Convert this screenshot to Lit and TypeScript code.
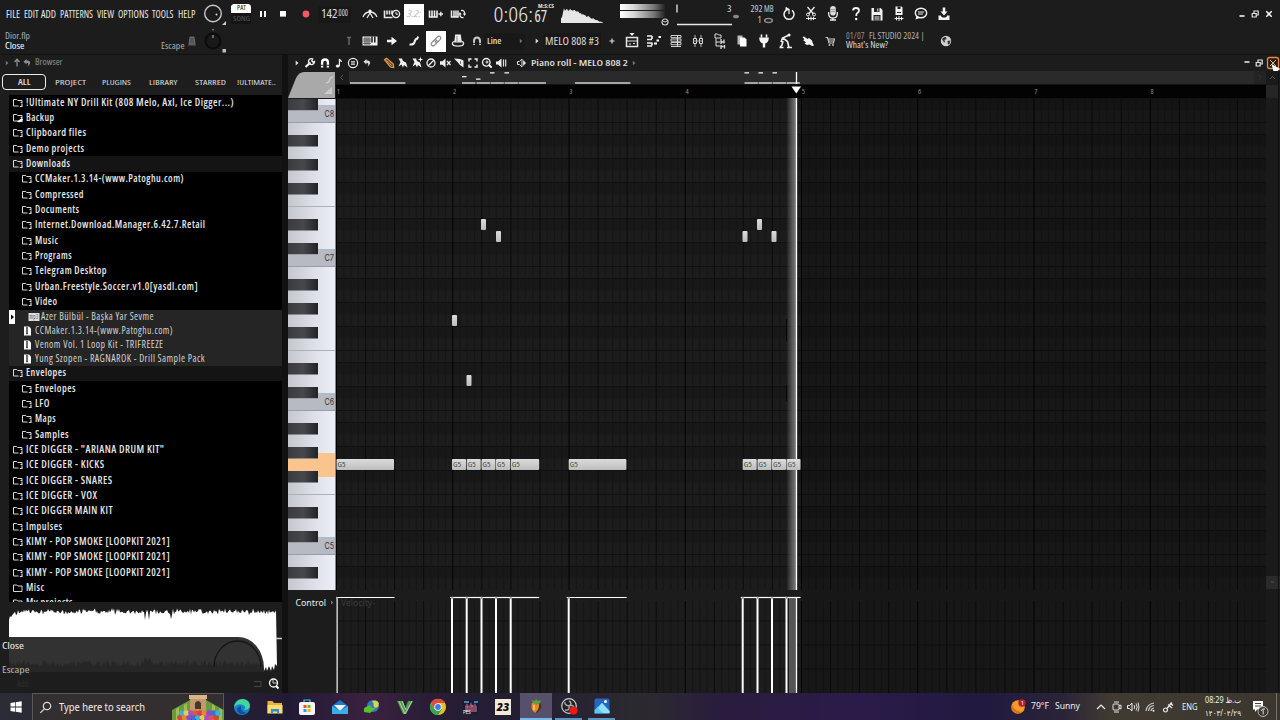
import { LitElement, html, svg, css } from "lit";
import { customElement } from "lit/decorators.js";

type Item = [number, number, unknown];

/** One line of text set to an exact advance width. */
const line = (s: string, w: number, size: number, cls = "") => html`<svg
  class="line ${cls}" width=${w} height=${size * 1.3}><text x="0" y=${size * 0.97} font-size=${size}
  textLength=${w} lengthAdjust="spacingAndGlyphs">${s}</text></svg>`;

/** Icon whose origin lies in the middle of its box. */
const icon = (body: unknown, w = 20, h = 26) => html`<svg class="icon" width=${w} height=${h}
  viewBox="${-w / 2} ${-h / 2} ${w} ${h}">${body}</svg>`;

/** Lays items out in a row: [left edge, width, content]. */
const strip = (items: Item[], start = 0) => {
  let x = start;
  return items.map(([l, w, c]) => {
    const gap = l - x;
    x = l + w;
    return html`<div class="cell" style="width:${w}px;margin-left:${gap}px">${c}</div>`;
  });
};
const at = (cx: number, body: unknown, w = 20, h = 26): Item => [cx - w / 2, w, icon(body, w, h)];

const noise = (n: number) => {
  const v = Math.sin(n * 127.1 + 11.7) * 43758.5453;
  return v - Math.floor(v);
};

const menu: [string, number, number][] = [
  ["FILE", 6, 14], ["EDIT", 23.5, 14.5], ["ADD", 41, 15], ["PATTERNS", 59.5, 33],
  ["VIEW", 97, 17], ["OPTIONS", 118, 30.5], ["TOOLS", 152, 21.5], ["HELP", 177.5, 17.5],
];

const G = {
  knob: svg`<circle cx="0" cy="-.5" r="8.3" fill="#1b1b1b" stroke="#c9c9c9" stroke-width="1.4"/><circle cx="3.5" cy=".5" r="1" fill="#ddd"/><path d="M13 7v4h-4z" fill="#ccc"/>`,
  knobDark: svg`<circle cx="0" cy="0" r="7.5" fill="#191919" stroke="#0b0b0b" stroke-width="2"/><path d="M0-6v3M0-12v1.500" stroke="#bbb"/><rect x="9.5" y="8" width="3.5" height="3.5" fill="#bbb"/>`,
  pause: svg`<rect x="-3" y="-3" width="2" height="6" fill="#fff"/><rect x="1" y="-3" width="2" height="6" fill="#fff"/>`,
  stop: svg`<rect x="-3" y="-3" width="6" height="5.6" fill="#fff"/>`,
  rec: svg`<circle r="3.4" fill="#f05a62"/>`,
  metro: svg`<g fill="none" stroke="#e4e4e4" stroke-width="1.3"><path d="M-7 3Q-5-2 0-2Q5-2 7 3M0-3v2M-3 4L0-1L3 4"/></g><circle cx="0" cy="-3" r="1.6" fill="#fff"/>`,
  wait: svg`<path d="M-7.5-3.5v7h8M-5-3.5v4M-2.5-3.5v4M0-3.5v4" fill="none" stroke="#e8e8e8" stroke-width="1.6"/><circle cx="4" cy="0" r="3.6" fill="#1c1c1c" stroke="#eee" stroke-width="1.3"/><path d="M4-2v2.2h2" stroke="#eee" fill="none"/>`,
  step: svg`<path d="M-6.5-3.5v6.5h7.5v-6.5M-4-3.5v6M-1.5-3.5v6" fill="none" stroke="#eee" stroke-width="1.6"/><path d="M2.5 0h4.5M4.8-2.2v4.4" stroke="#eee" stroke-width="1.4"/>`,
  loop: svg`<path d="M-6.5-3.5v6.5h6.5v-6.5M-4-3.5v6M-2-3.5v6" fill="none" stroke="#eee" stroke-width="1.5"/><path d="M3-3.500q4-.5 3.500 3.500M5.500 3.500q-4 .5-3.500-3.500" stroke="#eee" stroke-width="1.3" fill="none"/><path d="M4.800-.5h3.400L6.500 2zM.3.500h3.400L2-2z" fill="#eee"/>`,
  power: svg`<path d="M-3-3.7A5 5 0 1 0 3-3.7" fill="none" stroke="#f2f2f2" stroke-width="1.5"/><path d="M0-4.5V0M-3-3.7l.2-2.6 2.6 1.6z" stroke="#f2f2f2" stroke-width="1.2" fill="#fff"/>`,
  cut: svg`<path d="M-3.5-7L2.5 0M3.5-7L-2.5 0" stroke="#eee" stroke-width="1.3"/><circle cx="-3" cy=".5" r="1.5" fill="none" stroke="#eee"/><circle cx="3" cy=".5" r="1.5" fill="none" stroke="#eee"/><path d="M-5 4.5h10M-2.5 3v3M0 2.5v4M2.5 3v3" stroke="#eee"/>`,
  mic: svg`<rect x="-2.8" y="-8" width="5.6" height="9.500" rx="2.8" fill="#ddd"/><path d="M-4.300-2v2q0 4 4.300 4t4.300-4v-2M0 4v2M-3 6h6" fill="none" stroke="#eee" stroke-width="1.3"/><path d="M-2-4.500h4M-2-2.500h4" stroke="#777" stroke-width=".7"/>`,
  help: svg`<path d="M-3-3.5q.3-2.5 3-2.5q3 0 3 2.5q0 1.6-1.7 2.5Q.2-.3.2 2" fill="none" stroke="#f2f2f2" stroke-width="1.8"/><circle cx=".2" cy="5" r="1.2" fill="#fff"/>`,
  save: svg`<path d="M-5.500-6H3.500L5.500-4V6.500H-5.500z" fill="#f3f3f3"/><path d="M-3-6h5.500v4h-5.500zM-3.500 1h7v5.500h-7z" fill="#222"/><path d="M.8-5.500v3M-2.500 3h5M-2.500 5h5" stroke="#eee" stroke-width="1"/>`,
  saveNew: svg`<path d="M-3.500-7.500H2.500L3.500-6.500V1H-3.500z" fill="#f3f3f3"/><path d="M-1.500-7.500h3v2.500h-3zM-2-2h4v1h-4z" fill="#222"/><path d="M-4.500 4.500h9M-2.500 2.800v3.500M0 2v5M2.500 2.800v3.500" stroke="#eee"/>`,
  chat: svg`<ellipse cx="0" cy="-1" rx="5.700" ry="4.800" fill="none" stroke="#f2f2f2" stroke-width="1.400"/><path d="M-4.500 2l-1 3.500L-1 3.700" fill="#fff"/><path d="M-3-2h6M-3 0h5" stroke="#eee"/>`,
  down: svg`<path d="M-5.500 1.500h2.500q0 2 3 2t3-2h2.500v4.500h-11z" fill="#f3f3f3"/><path d="M-1.300-6.500h2.600v4h2.200L0 1.500-3.500-2.500h2.200z" fill="#f3f3f3"/>`,
  min: svg`<path d="M-2.500 2h5" stroke="#e8e8e8" stroke-width="1.700"/>`,
  restore: svg`<path d="M-2.800-.5h4v3.500h-4zM-1-1v-2h4.200v4h-2" fill="none" stroke="#e2e2e2" stroke-width="1.200"/>`,
  close: svg`<path d="M-2.700-2.700l5.400 5.400M2.700-2.700l-5.400 5.400" stroke="#fff" stroke-width="1.500"/>`,
  metroMini: svg`<path d="M-3 3l1-7h4l1 7zM-4 4h8" fill="#555" stroke="#777" stroke-width=".8"/>`,
  tee: svg`<path d="M0-4v8M-2-3.500h4" stroke="#6a6a6a" stroke-width="1.400"/>`,
  gridKeys: svg`<rect x="-7.500" y="-4.500" width="15" height="9" fill="#f2f2f2"/><path d="M-7-2h8M-7 0h8M-7 2.300h8M-5-4v8M-3-4v8M-1-4v8" stroke="#222" stroke-width=".7"/><path d="M2-4.500v6M4.800-4.500v6" stroke="#161616" stroke-width="1.500"/>`,
  arrow: svg`<path d="M-5-1.300h4.500v-3L5 0-.5 4.300v-3H-5z" fill="#f6f6f6"/>`,
  slide: svg`<path d="M-4.500 3.500q4.500.500 5-2.500t3.500-4" stroke="#eee" fill="none" stroke-width="2"/><path d="M3-5l2 1-1.500 3z" fill="#fff"/>`,
  link: svg`<g fill="none" stroke="#8c8c8c" stroke-width="1.200" transform="rotate(-45)"><rect x="-6" y="-1.900" width="7" height="3.800" rx="1.900"/><rect x="-1" y="-1.900" width="7" height="3.800" rx="1.900"/></g>`,
  hat: svg`<path d="M-2.800-6.500h5.600l1 8h-7.600z" fill="#eee"/><ellipse cx="0" cy="2.500" rx="5.600" ry="2.600" fill="none" stroke="#ddd" stroke-width="1.400"/><path d="M-1-5v6" stroke="#888"/>`,
  magnet: svg`<path d="M-3 4v-4q0-3.500 3-3.500t3 3.500v4" fill="none" stroke="#c8c8c8" stroke-width="2"/><path d="M-4 2.400h2M2 2.400h2" stroke="#222"/>`,
  tri: svg`<path d="M-1.300-2.500L1.500 0-1.300 2.500z" fill="#ddd"/>`,
  triDim: svg`<path d="M-1.200-2.200L1.400 0-1.200 2.200z" fill="#777"/>`,
  plus: svg`<path d="M-2.500 0h5M0-2.500v5" stroke="#ddd" stroke-width="1.200"/>`,
  playlist: svg`<rect x="-5.500" y="-3.500" width="11" height="9" fill="none" stroke="#e6e6e6" stroke-width="1.500"/><path d="M-5 0h10M-3 3h2M1 2.500h2" stroke="#ddd"/><path d="M-2.500-8h5L0-5z" fill="#eee"/>`,
  roll: svg`<path d="M-7-5h5M-7-1.500h5M-7 2h5M-7 5h5M-2-5v3M-2 1.500v3" stroke="#eee" stroke-width="1.700"/><path d="M0 2.500h3M2.500-.5h2.500M4.500-4h2.500" stroke="#fff" stroke-width="2.200"/>`,
  rack: svg`<path d="M-5-5.500h10v2.200h-10zM-5-2h10v2.200h-10zM-5 1.500h10v2.200h-10zM-5 5.500h10" fill="none" stroke="#cfcfcf"/><path d="M1.500-5.500v11" stroke="#ddd"/>`,
  mixer: svg`<path d="M-3-6v12M3-6v12" stroke="#bbb"/><path d="M-4.500-2.500h3v5h-3zM1.500-2.500h3v5h-3z" fill="#1c1c1c" stroke="#ddd"/><path d="M-5 0h10" stroke="#aaa"/>`,
  tree: svg`<path d="M-5-7h2.500l1 1h2.500v3h-6zM-4-2.500v7.500h4M-4 1h4" fill="none" stroke="#ddd"/><path d="M1-2v5M1 1h2.500M4-1.500v4M1 4v4M1 5.500h2.500M4.500 4v3.500" fill="none" stroke="#ddd" stroke-width="1.300"/>`,
  pages: svg`<path d="M-4.500-5.500h5v9h-5z" fill="#bbb"/><path d="M-2-3.500h4.500l2 2v7h-6.500z" fill="#fff"/>`,
  plug: svg`<path d="M-2.500-6.500v3M2.500-6.500v3" stroke="#fff" stroke-width="1.600"/><path d="M-4.800-3.500h9.600q0 5-3.600 6v4h-2.400v-4q-3.600-1-3.600-6z" fill="#f4f4f4"/>`,
  tool: svg`<circle cx="3" cy="-6" r="1.600" fill="#eee"/><path d="M2-5.500L-3.500-3l-1.500 4M-3-3L1.500.5 3 6.500M-3 0l-1 4-2 2.500M-6.500 6.500h4M1 6.500h5" fill="none" stroke="#eee" stroke-width="1.600"/>`,
  hand: svg`<path d="M-5.500-4l1.500-.5 3.500 2.500 1.500-1 3 2.500.5 2L6 4.500 4 5 1.500 3.500-1 4-3.500 2.500-2 1.500-5-1-3.500-1.500z" fill="#f4f4f4"/>`,
  cart: svg`<path d="M-4.500-3.500h2l1.500 5.500h4.500l1-4h-6.500M-1.500 0h5.500" fill="none" stroke="#ccc" stroke-width="1.100"/><circle cx="-.5" cy="4" r="1" fill="#bbb"/><circle cx="3" cy="4" r="1" fill="#bbb"/>`,
  earth: svg`<circle r="5.200" fill="#cfcfcf"/><path d="M-4-2q2-2.500 4-2l.5 2-2 1 .5 2-1 .5zM1.500 0l3-.5-1 3.500-1.500.5z" fill="#333"/>`,
  up: svg`<path d="M0 3.500v-7M-2.500-1L0-3.700 2.500-1" stroke="#8e8e8e" stroke-width="1.300" fill="none"/>`,
  undo: svg`<path d="M-.5-4L-3.500-1.200-.5 1.500V-.2Q2.500 0 .5 3.700 4.500 0 2.500-1.800 1.500-2.700-.5-2.400z" fill="#ddd"/>`,
  wrench: svg`<path d="M-4.500 4l5-4.500" stroke="#eee" stroke-width="2.200"/><path d="M4.500-1.500A3 3 0 1 1 2.600-4.200L1.800-2.200 3-.8z" fill="none" stroke="#eee" stroke-width="1.400"/>`,
  magnetB: svg`<path d="M-2.900 4.500v-5q0-3 2.900-3t2.900 3v5" fill="none" stroke="#fff" stroke-width="2.300"/><path d="M-4.500 2.300h3M1.500 2.300h3" stroke="#222"/>`,
  note: svg`<ellipse cx="-1.300" cy="3" rx="2" ry="1.500" fill="#eee"/><path d="M.4 3V-4Q1-2 3-1.500" stroke="#eee" fill="none" stroke-width="1.200"/>`,
  menuC: svg`<circle r="4.600" fill="none" stroke="#eee" stroke-width="1.200"/><path d="M-2-1.200h4M-2 1.200h4" stroke="#eee" stroke-width="1.200"/>`,
  pencil: svg`<path d="M-4.500-3.200l2-1.600L4.300 1l.4 3.500-3.300-.4z" fill="#6d4820" stroke="#e8a04c" stroke-width="1.100"/><path d="M-3-2.500L2.500 2.500" stroke="#f5c382" stroke-width=".7"/>`,
  brush: svg`<path d="M-4.500-4.500h3.500L0-2l3 1.500L4.500 4.500 1 2 0 4.500-1.500 1.500-4.500 3.500-2.500-1z" fill="#f1f1f1"/>`,
  brush2: svg`<path d="M-4.500-4.500h3.500L0-2l3 1.500L4.500 4.500 1 2 0 4.500-1.500 1.500-4.500 3.500-2.500-1z" fill="#f1f1f1"/><path d="M1.500-3.500h4M3.500-5.500v4" stroke="#fff"/>`,
  no: svg`<circle r="4" fill="none" stroke="#eee" stroke-width="1.300"/><path d="M-2.700 2.700l5.400-5.400" stroke="#eee" stroke-width="1.300"/>`,
  mute: svg`<path d="M-5-1.800h2.500l3-2.700v9l-3-2.700H-5z" fill="#f1f1f1"/><path d="M2-2l3.500 4M5.500-2L2 2" stroke="#eee" stroke-width="1.200"/>`,
  slice: svg`<path d="M-5-4.500Q2-4.500 4.500-2.500V4.500Q1 3-1.500-1z" fill="#eee"/><path d="M1.500-2v3" stroke="#777"/>`,
  select: svg`<path d="M-4-1.500v-2.500h2.500M1.500-4H4v2.500M4 1.500V4H1.500M-1.500 4H-4V1.500" fill="none" stroke="#eee" stroke-width="1.400"/>`,
  zoom: svg`<circle cx="-.7" cy="-.7" r="3.800" fill="none" stroke="#eee" stroke-width="1.300"/><circle cx="0" cy="-1" r="1.500" fill="#bbb"/><path d="M2 2l2.700 2.700" stroke="#fff" stroke-width="1.800"/>`,
  play: svg`<path d="M-5-1.500h2l3.500-3v9L-3 1.500h-2z" fill="#f1f1f1"/><path d="M2.500-3.500v7M4.700-3.500v7" stroke="#ddd" stroke-width="1.200"/>`,
  speaker: svg`<path d="M-4.500-1.500h2L0-4v8l-2.500-2.500h-2z" fill="none" stroke="#ddd"/><path d="M1.200-3L4 0 1.200 3z" fill="#eee"/>`,
};

const folder = (kind: string) => icon(
  kind === "misc"
    ? svg`<path d="M-4.500-3h3.200l1 1H4v5.500h-8.500z" fill="none" stroke="#d8d8d8"/>`
    : svg`<path d="M.5 3h-5v-6.500h3.200l1 1H4V-1" fill="none" stroke="#d8d8d8"/><path d="M4 .5v3M1.800 3.500h2.800M2.500-.5h2" stroke="#d8d8d8" stroke-width="1.200"/>${kind === "link" ? svg`<path d="M-1 3.500L4 0l1 2-4 2.500z" fill="#fff"/>` : ""}`,
  12, 12);

// name, text width, level, kind
const rows: [string, number, number, string][] = [
  ["!Ultimate NY Drill Kit (808 Melo, Axl, Ice Digger...)", 208, 0, ""], ["Backup", 28.5, 0, "link"],
  ["Clipboard files", 60.5, 0, ""], ["Demo projects", 58.5, 0, ""], ["Downloads", 44.5, 0, "open"],
  ["CCMaker.1.3.14-(www.Patoghu.com)", 149, 1, ""], ["Compressed", 49, 1, ""], ["Documents", 44.5, 1, ""],
  ["Internet.Download.Manager.6.42.7.Retail", 170.5, 1, ""], ["Music", 23.5, 1, ""], ["Programs", 37, 1, ""],
  ["Telegram Desktop", 72, 1, ""], ["Urban.Freestyle.Soccer.v1.0[yasdl.com]", 163, 1, ""], ["Video", 22.5, 1, ""],
  ["Azer Bülbül - Başka Yar Sevme", 113, 2, "mp3"], ["CCMaker.1.3.14-(www.Patoghu.com)", 138, 2, "zip"],
  ["Venom Vol. 1 Loop Kit - TRIFREEZE", 128.5, 2, "zip"], ["Yung Szopen - RAGNAROK - Drill Sample Pack", 170, 2, "zip"],
  ["Envelopes", 40.5, 0, "open"], ["Envelopes", 41, 1, ""], ["LFO", 15, 1, ""], ["Maps", 21, 1, ""], ["Samples", 34, 1, ""],
  ["ICE DIGGER - \"ARIANA DRUM KIT\"", 138.5, 0, ""], ["ICE DIGGER - KICKS", 78.5, 0, ""], ["ICE DIGGER - SNARES", 86.5, 0, ""],
  ["ICE DIGGER - VOX", 71.5, 0, ""], ["ICE DIGGER MAIN KIT", 87, 0, ""], ["Impulses", 36.5, 0, ""],
  ["KIMY - POP SMOKE [LOOPKIT 2021]", 144, 0, ""], ["KIMY - POP SMOKE [LOOPKIT 2021]", 144, 0, ""],
  ["KIMY - POP SMOKE [LOOPKIT 2021]", 144, 0, ""], ["Misc", 18.5, 0, "misc"], ["My projects", 47, 0, "misc"],
];

const BAR = 116.25;
const black = [false, true, false, true, false, true, false, false, true, false, true, false]; // B downwards

@customElement("app-root")
export class AppRoot extends LitElement {
  static styles = css`
    :host { display: flex; flex-direction: column; width: 1280px; height: 720px; overflow: hidden; background: #1c1c1c;
      color: #dcdcdc; font-family: "Open Sans", "Noto Sans", sans-serif; font-stretch: 75%; }
    svg { display: block; flex: none; }
    .line { overflow: visible; fill: currentColor; }
    .icon { overflow: visible; }
    .cell { flex: none; height: 100%; display: flex; align-items: center; justify-content: center; }
    .bar { display: flex; flex: none; align-items: center; height: 28px; background: #1c1c1c; }
    .bar.two { height: 27px; box-sizing: border-box; border-bottom: 1px solid #111; }
    .menu { color: #e6e6e6; font-weight: 500; }
    .bold { font-weight: 600; }
    .dim { color: #b0b0b0; }
    .grey { color: #8f8f8f; }
    .white { color: #fff; }
    .stack { display: flex; flex-direction: column; width: 100%; height: 100%; justify-content: center; }
    .patsong { width: 20px; height: 20px; background: #141414; border-radius: 2px; overflow: hidden; }
    .pat { height: 9px; background: #fff; color: #222; display: flex; align-items: center; justify-content: center; border-radius: 3px 3px 0 0; }
    .song { height: 11px; color: #5a5a5a; display: flex; align-items: center; justify-content: center; }
    .tile { width: 20px; height: 21px; background: #fff; display: flex; align-items: center; justify-content: center; color: #b5b5b5; font-style: italic; }
    .box { width: 100%; height: 17px; background: #181818; display: flex; align-items: center; justify-content: center; }
    .meter { width: 45px; height: 14px; display: flex; flex-direction: column; gap: 1px; margin-bottom: 7px; }
    .meter div { flex: 1; background: linear-gradient(90deg, #fff 0, #d8d8d8 30%, #777 75%, #222 100%); }
    .hint { width: 185px; display: flex; flex-direction: column; }
    .hintrow { display: flex; justify-content: space-between; height: 10px; align-items: center; }
    .main { flex: none; height: 638px; display: flex; }
    .browser { width: 282px; height: 638px; background: #1d1d1d; display: flex; flex-direction: column; flex: none; }
    .head { height: 16px; display: flex; align-items: center; flex: none; }
    .tabs { height: 22px; display: flex; align-items: center; flex: none; }
    .all { width: 44px; height: 16px; border: 1px solid #eee; border-radius: 4px; box-sizing: border-box; display: flex; align-items: center; justify-content: center; }
    .listwrap { height: 507px; margin-left: 9px; margin-top: 2px; background: #000; overflow: hidden; flex: none; }
    .item { height: 15.33px; display: flex; align-items: center; gap: 2px; padding-left: 3px; color: #e6e6e6; font-weight: 600; letter-spacing: .5px; }
    .l1 { padding-left: 12px; }
    .l2 { padding-left: 13px; height: 14px; background: #252525; color: #d2d2d2; font-weight: 500; gap: 3px; }
    .open { background: #141414; }
    .play { padding-left: 0; }
    .marker { width: 6px; height: 14px; background: #fff; margin-right: 8px; }
    .gap { width: 6px; background: #111; flex: none; }
    .preview { position: relative; height: 72px; width: 282px; flex: none; }
    .close { position: absolute; left: 2px; top: 38px; color: #eee; }
    .esc { position: absolute; left: 2px; top: 62px; color: #b5b5b5; }
    .foot { display: flex; align-items: center; height: 19px; flex: none; }
    .roll { width: 992px; display: flex; flex-direction: column; }
    .cols { display: flex; height: 622px; }
    .task { height: 27px; flex: none; display: flex; align-items: center; font-stretch: 100%; color: #f0f0f0; font-family: "Noto Sans", "DejaVu Sans", sans-serif;
      background: linear-gradient(90deg, #2b2c35 0, #262132 220px, #221a35 290px, #3b2140 370px, #281d35 430px, #231e33 510px, #2c2a30 650px, #291c3e 720px, #2b1b4a 860px, #21193f 980px, #2a2338 1060px, #403a33 1110px, #3b372e 1280px); }
    .search { width: 192px; height: 27px; box-sizing: border-box; border: 1px solid #5c5858; border-bottom: 0; background: #332f30; display: flex; align-items: center; }
    .active { width: 32px; height: 27px; background: #57506b; border-bottom: 2px solid #76b9ed; box-sizing: border-box; display: flex; align-items: center; justify-content: center; }
    .running { width: 27px; height: 27px; border-bottom: 2px solid #5c94c4; box-sizing: border-box; display: flex; align-items: center; justify-content: center; }
  `;

  private topBar() {
    let d = "M0 18";
    for (let x = 0; x <= 42; x += 1) {
      const e = x < 3 ? 5 + x * 3 : x < 9 ? 16 - noise(x) * 2 : 15.5 * (1 - (x - 9) / 35);
      d += `L${x} ${18 - Math.max(0.5, e - noise(x + 3) * 2.2)}`;
    }
    return strip([
      ...menu.map(([s, x, w]): Item => [x, w, line(s, w, 11.5, "menu")]),
      at(213, G.knob, 28),
      [231, 20, html`<div class="patsong"><div class="pat">${line("PAT", 9, 6.5)}</div><div class="song">${line("SONG", 17, 7)}</div></div>`],
      at(262.5, G.pause), at(283, G.stop), at(306, G.rec, 14),
      [318, 33, html`<div class="box">${line("142", 16.5, 12.5)}${line(".000", 11, 8.5)}</div>`],
      at(370, G.metro), at(392, G.wait), [404, 20, html`<div class="tile">${line("3.2:", 14, 9.5)}</div>`],
      at(436, G.step), at(458, G.loop),
      [493, 56, icon(svg`<g fill="#e6e6e6"><text x="-27.500" y="8" font-size="21" font-weight="300" textLength="39.500" lengthAdjust="spacingAndGlyphs">0:06:</text><text x="13.500" y="7.500" font-size="15.500" textLength="12.500" lengthAdjust="spacingAndGlyphs">67</text><text x="17" y="-6.500" font-size="4.500" font-weight="700" textLength="16" lengthAdjust="spacingAndGlyphs">M:S:CS</text></g>`, 56, 28)],
      [561, 42, html`<svg width="42" height="18"><path d="${d}V18z" fill="#e6e6e6"/></svg>`],
      [620, 45, html`<div class="meter"><div></div><div></div></div>`],
      [674, 70, icon(svg`<circle cx="-44" cy="8" r="3" fill="none" stroke="#ccc" stroke-width="1.200"/><path d="M-46 7l2 1 2-1" stroke="#ccc" fill="none"/><path d="M-32-9.500v8M-32 10.500h55" stroke="#e8e8e8" stroke-width="1.300"/><text x="18" y="-2.500" font-size="9" fill="#ddd" textLength="4.500" lengthAdjust="spacingAndGlyphs">3</text><ellipse cx="27" cy="2.500" rx="3" ry="1.800" fill="#888"/>`, 70, 28)],
      [750, 25, icon(svg`<g fill="#c8d0c8" font-size="9"><text x="-12" y="-2.500" textLength="12" lengthAdjust="spacingAndGlyphs">292</text><text x="1.500" y="-2.500" textLength="9.500" lengthAdjust="spacingAndGlyphs">MB</text><text x="-5" y="9" textLength="4" lengthAdjust="spacingAndGlyphs">1</text></g><ellipse cx="6" cy="6.500" rx="3.800" ry="2" fill="none" stroke="#888" stroke-width="1.600"/>`, 25, 28)],
      at(789, G.power), at(811, G.cut), at(833, G.mic), at(855.5, G.help), at(877, G.save), at(899, G.saveNew),
      at(921, G.chat), at(943.5, G.down), at(1242, G.min, 12), at(1255, G.restore, 12), at(1269, G.close, 12),
    ]);
  }

  private secondBar() {
    return strip([
      [4.5, 180, html`<div class="hint"><div class="hintrow dim">${line("Dior.flp", 25, 8.8)}</div><div class="hintrow white">${line("Close", 19.5, 8.8)}<span class="dim">${line("Escape", 23.5, 8.8)}</span></div></div>`],
      at(192, G.metroMini, 10), at(213, G.knobDark, 28), at(348.5, G.tee, 10), at(370, G.gridKeys), at(392, G.arrow), at(414, G.slide),
      [426, 20, html`<div class="tile">${icon(G.link, 16, 16)}</div>`],
      at(458, G.hat), at(476.5, G.magnet, 12),
      [484, 41, html`<div class="box">${strip([[2, 14.5, line("Line", 14.5, 9.2, "bold")], at(36, G.triDim, 8)])}</div>`],
      at(537, G.tri, 8), [543, 58, html`<div class="box">${line("MELO 808 #3", 54, 11.5)}</div>`], at(611.5, G.plus, 12),
      at(632, G.playlist), at(654, G.roll), at(676, G.rack), at(698, G.mixer), at(720, G.tree), at(742, G.pages), at(764, G.plug),
      at(786, G.tool), at(808, G.hand), at(829.5, G.cart),
      [846, 78, html`<div class="stack"><div class="hintrow dim"><span class="grey">${line("01/07", 18.5, 8.3)}</span>${line("FL STUDIO 2024 |", 55.5, 8.3)}</div><div class="hintrow">${line("What's New?", 42, 8.6)}</div></div>`],
      at(945.5, G.earth, 14),
    ]);
  }

  private item([name, w, level, kind]: [string, number, number, string]) {
    if (level === 2) {
      const mp3 = kind === "mp3";
      return html`<div class="item l2 ${mp3 ? "play" : ""}">
        ${mp3 ? html`<svg class="marker" width="6" height="14"><path d="M2 4.500l3 2.500L2 9.500z" fill="#000"/></svg>${icon(svg`<rect x="-3.500" y="-4" width="11" height="8" fill="#ddd"/><text x="-2.500" y="2" font-size="6.500" fill="#555" textLength="9" lengthAdjust="spacingAndGlyphs">mp3</text>`, 12, 12)}`
          : icon(svg`<path d="M-3-4.500h5l2 2v7h-7z" fill="#fff"/><path d="M0-4v6M-.8 2.500h1.600" stroke="#222" stroke-width="1.300"/>`, 10, 12)}
        ${line(name, w, 10.8)}</div>`;
    }
    return html`<div class="item ${level ? "l1" : ""} ${kind === "open" ? "open" : ""}">${folder(kind)}${line(name, w, 10.8)}</div>`;
  }

  private preview() {
    let top = "M9 35V20", low = "";
    for (let x = 9; x <= 276; x += 1) {
      const dip = x === 145 || x === 149 || x === 171 ? 8 : 0;
      top += `L${x} ${(x < 18 ? 18 - (x - 9) * 0.9 : 10) - noise(x) * 4 + noise(x * 3) * 3 + dip}`;
      if (x <= 263) low += `L${x} ${65 - noise(x + 5) * 7 + (x > 143 && x < 152 ? -4 : 0)}`;
    }
    return html`<div class="preview">
      <svg width="282" height="72" class="icon">
        <path d="${top}L277 64L275 62L274 68L272 64L271 69L269 64L267 69L266 65L264 69L238 66V35H9z" fill="#fff"/><path d="M276 36.500h6" stroke="#ccc" stroke-width="1.500"/>
        <path d="M9 35H238A26 31 0 0 1 264 66V70H9z" fill="#323232"/>
        <path d="M9 70${low}V70z" fill="#262626"/>
        <path d="M214 65A23.500 26 0 0 1 261 65" fill="none" stroke="#161616" stroke-width="1.300"/>
      </svg>
      <div class="close">${line("Close", 22, 9.7)}</div><div class="esc">${line("Escape", 27.5, 9.7)}</div>
    </div>`;
  }

  private keys() {
    const out: unknown[] = [];
    // each pass draws one octave, from its B row down to its C row
    for (let t = -120; t < 492; t += 144) {
      black.forEach((b, i) => {
        const y = t + i * 12;
        if (b) out.push(svg`<rect x="0" y=${y} width="30" height="11.500" fill="url(#bk)"/>`);
      });
      out.push(svg`<path d="M0 ${t + 83.5}h47" stroke="#aeb1b8"/><path d="M30 ${t + 126}h17v17.500h-47v-12h30z" fill="#b8bac3"/><path d="M0 ${t + 143.5}h47" stroke="#999ca5"/>`);
    }
    return svg`<rect width="47.500" height="491" fill="url(#wk)"/>${out}
      <path d="M0 360h30v-6h17v24H30v-6H0z" fill="#fac48c"/>
      <g font-size="8.500" fill="#333" font-family="Inter, sans-serif">${["C8", "C7", "C6", "C5"].map((c, i) => svg`<text x="36.500" y=${18 + i * 144} textLength="9.500" lengthAdjust="spacingAndGlyphs">${c}</text>`)}</g>`;
  }

  private canvas() {
    const lines: unknown[] = [];
    for (let i = 0; i * BAR / 16 < 930; i++) {
      const x = i * BAR / 16 + 0.5;
      const s = i % 16 === 0 ? "#020202" : i % 4 === 0 ? "#0c0c0c" : "#161616";
      lines.push(svg`<path d="M${x} 28V519M${x} 530V622" stroke=${s}/>`);
    }
    const bands: unknown[] = [];
    for (let o = -1; o < 4; o++) black.forEach((b, i) => {
      const y = 51.5 + o * 144 + i * 12;
      if (y < 28 - 12 || y > 508) return;
      if (b) bands.push(svg`<rect x="0" y=${y} width="930" height="12" fill="#181818"/>`);
      if (b || i === 0 || i === 7) bands.push(svg`<path d="M0 ${y}H930" stroke="#101010"/>`);
    });
    const notes: [number, number, number, boolean][] = [
      [0.5, 388, 57.5, true], [116, 388, 14, true], [130.7, 388, 14, true], [145.5, 388, 14, true], [160, 388, 14, true], [174.7, 388, 28.5, true],
      [232.7, 388, 57.7, true], [406.7, 388, 14, true], [421.5, 388, 14, true], [436, 388, 14, true], [450.5, 388, 14, true],
      [116, 244, 5, false], [130.5, 304, 5, false], [145, 148, 5, false], [160, 160, 5, false],
      [406.5, 160, 5, false], [421, 148, 5, false], [435.5, 160, 5, false],
    ];
    const stems = [[0.5, 58], [116, 14], [130.7, 14], [145.5, 14], [160, 14], [174.7, 28.5], [232.7, 58], [406.7, 14], [421.5, 14], [436, 14], [450.5, 14]];
    const mini = [[14, 56], [126, 14], [140.5, 14], [154.5, 14], [168.5, 14], [182.5, 28], [239, 56], [408.5, 14], [422.5, 14], [436.5, 14], [450.5, 14]];
    const dots = [[126, 5.5], [140, 8], [154, 1.7], [168.5, 1.7], [408.5, 1.7], [422.5, 1.7], [436.5, 1.7]];
    return svg`
      <rect y="0" width="930" height="13.500" fill="#2a2a2a"/><rect width="13" height="13" fill="#1b1b1b"/><path d="M7 4L4.500 6.500 7 9M923 4l2.500 2.500L923 9" stroke="#555" fill="none"/>
      <rect x="918" width="12" height="13" fill="#202020" opacity=".6"/>
      ${mini.map(([x, w]) => svg`<rect x=${x} y="11" width=${w - 0.6} height="2" fill="#a5a5a5"/>`)}
      ${dots.map(([x, y]) => svg`<rect x=${x} y=${y - 0.5} width="4.500" height="1.300" fill="#eee"/>`)}
      <rect y="13.500" width="930" height="13.500" fill="#030303"/>
      ${[1, 2, 3, 4, 5, 6, 7, 8].map((n, i) => svg`<text x=${i * BAR + 0.8} y="23" font-size="7.500" fill="#8e8e8e">${n}</text>`)}
      <rect y="27" width="930" height="492" fill="#1c1c1c"/>${bands}${lines}
      <rect y="519" width="930" height="7" fill="#1c1c1c"/>
      <path d="M0 550H930M0 574H930M0 598H930" stroke="#101010"/>
      <rect x="465.500" y="28" width="465" height="594" fill="#000" opacity=".15"/>
      <path d="M450.500 248v22M450.500 314v16" stroke="#000"/>
      <rect x="450" y="27" width="11" height="492" fill="url(#ph)"/>
      <path d="M460.500 1v12M460.500 27V519" stroke="#fff" stroke-width="1.300"/><path d="M455.500 15.500h9.500l-4.700 7z" fill="#fff"/>
      ${notes.map(([x, y, w, n]) => svg`<rect x=${x} y=${y} width=${w} height="11" rx="1" fill="url(#nt)"/>${n ? svg`<text x=${x + 1} y=${y + 7.8} font-size="6.700" fill="#444" textLength="8" lengthAdjust="spacingAndGlyphs">G5</text>` : ""}`)}
      <text x="5" y="535" font-size="9" fill="#3b3b3b" font-family="Noto Sans" textLength="34" lengthAdjust="spacingAndGlyphs">Velocity-</text>
      <rect x="453" y="526" width="8" height="96" fill="#555"/>
      ${stems.map(([x, w], i) => svg`<rect x=${x - (i ? 1 : 0)} y="526" width=${i ? 2 : 1.2} height="96" fill="#fff"/><path d="M${x - (i ? 2 : 0)} 526.500h${w + (i ? 2 : 0)}" stroke="#fff" stroke-width="1.200"/><circle cx=${x + 0.2} cy="527" r="1.200" fill="#aaa"/>`)}
      <path d="M460.500 526v96" stroke="#fff" stroke-width="1.300"/>`;
  }

  private taskbar() {
    const crowd = ["#d5453b", "#3a70d0", "#b34ac8", "#e8872e", "#3fb0d8", "#e0563f", "#8a4bd0", "#d8d25a"];
    return strip([
      at(16, svg`<path d="M-5.500-4l4.500-.7V-.4h-4.500zM-.3-4.800l6-.9V-.4h-6zM-5.500.4H-1v4.300l-4.500-.7zM-.3.4h6v5.300l-6-.9z" fill="#fff"/>`),
      [32, 192, html`<div class="search">${strip([
        at(12, svg`<circle cx="2" cy="-1.500" r="3.700" fill="none" stroke="#ddd" stroke-width="1.200"/><path d="M-.7 1.300l-4 4" stroke="#ddd" stroke-width="1.200"/>`, 20, 25),
        [26, 86, line("Type here to search", 86, 10)],
        [139, 52, html`<svg width="52" height="26"><path d="M0 26V16L18 6V26zM52 26V16L34 6V26z" fill="#6b9a3c"/><path d="M4 26V15l3-2v13M12 26V11l3-2v17M40 26V10l3 2v14M47 26V14l3 2v10" fill="#9cbf52"/><path d="M18 2h16v16H18z" fill="#c09a68"/><path d="M17 1h18v4H17z" fill="#d8b78a"/><path d="M23 15V9q3-4 6 0v6z" fill="#473629"/>${Array.from({ length: 18 }, (_, i) => svg`<circle cx=${8 + (i % 9) * 4.5 + (i > 8 ? 2 : 0)} cy=${i > 8 ? 19 : 23.5} r="2.800" fill=${crowd[(i * 3 + (i > 8 ? 1 : 0)) % 8]}/>`)}</svg>`],
      ], 0)}</div>`],
      at(242, svg`<circle r="8" fill="#1683cf"/><path d="M-8 0Q-6-8 1-8 8-7 8-1 7 3 2 3 5 0 1-2-4-4-8 0z" fill="#42d69a"/><path d="M-1-1Q-2 5 5 6-2 9-5 4-6 0-1-1z" fill="#0d4f9c"/>`),
      at(274.5, svg`<path d="M-7.500-6h5l1.500 2h8v10h-14.500z" fill="#e9b23c"/><path d="M-7.500-2h15v8.500h-15z" fill="#ffdc70"/><path d="M-4 2h8v4.500h-2v-2h-4v2h-2z" fill="#2f8fd8"/>`),
      at(307, svg`<path d="M-3-5v-2h6v2" stroke="#4ac1ed" fill="none" stroke-width="1.200"/><rect x="-8" y="-5" width="16" height="13" rx="2" fill="#f4f4f4"/><path d="M-3.500-2h3v3h-3z" fill="#f05028"/><path d="M.5-2h3v3h-3z" fill="#7eb900"/><path d="M-3.500 2h3v3h-3z" fill="#20a0e8"/><path d="M.5 2h3v3h-3z" fill="#ffb800"/>`),
      at(340, svg`<path d="M-8-1L0-7 8-1V7H-8z" fill="#1c78c8"/><path d="M-6-2H6L0 4z" fill="#f2f2f2"/><path d="M-8-1L0 4 8-1V7H-8z" fill="#39aeea"/>`),
      at(372, svg`<circle cx="1" cy="-1" r="6" fill="#3678b8"/><path d="M0-6q6-2 7 3l-4 2z" fill="#c3d94e"/><path d="M-8 1l6-3 2 3 5-1-7 6-6-1z" fill="#55c034"/><circle cx="4" cy="-2" r="2.500" fill="#e5cf55"/>`),
      at(405, svg`<path d="M-8-6h6l2 8 3-8H8L1 7h-3z" fill="#4ca048"/><path d="M-6-6L0 7 7-6M-3-6L1 3" stroke="#bcc8bc" fill="none"/>`),
      at(438, svg`<circle r="8" fill="#e6c229"/><path d="M-7-4A8 8 0 0 1 7-4H0L-4 2z" fill="#e04b3c"/><path d="M-7-4A8 8 0 0 0 0 8L4 2H-4z" fill="#35a353"/><circle r="3.700" fill="#fff"/><circle r="2.900" fill="#3b7de8"/>`),
      at(471, svg`<rect x="-8" y="-7" width="16" height="14" fill="#171b38"/><path d="M-6 5V-1l2-3 2 3 2-4 2 4 2-3 2 4v5z" fill="#8a4a62"/><path d="M-7-5h5M3-5h4M-4 0h1M0-1h2" stroke="#59a5d0" stroke-width="1.500"/><text x="-8" y="7" font-size="4.500" fill="#fff">PES</text>`),
      at(503, svg`<rect x="-8" y="-8" width="16" height="16" fill="#f3e9d8"/><text x="-6.200" y="4" font-size="10.500" font-weight="900" font-style="italic" fill="#111" textLength="12.500" lengthAdjust="spacingAndGlyphs">23</text>`),
      [520, 32, html`<div class="active">${icon(svg`<path d="M3-4.500q5 5-1 10.500-3 1-4 0z" fill="#333"/><path d="M-4-3q4-3 7 0 1 6-4 10-5-4-3-10z" fill="#ee8425"/><path d="M-3-3l-1-3 3 1 1-2 2 2 3-1-1 3-3 2z" fill="#57a43a"/><path d="M-2-1v5" stroke="#ffd86a" stroke-width="1.500"/>`, 20, 24)}</div>`],
      [555, 27, html`<div class="running">${icon(svg`<circle r="7.300" fill="#222" stroke="#ccc" stroke-width="1.200"/><path d="M0-5q4 2 0 5-5-1-4-4M0 0q1 5-4 4M0 0q4-2 5 2" fill="none" stroke="#aaa" stroke-width="1.400"/><circle cx="4.500" cy="4.500" r="4" fill="#f01818"/>`, 20, 24)}</div>`],
      [588, 27, html`<div class="running">${icon(svg`<rect x="-7.500" y="-7.500" width="15" height="15" rx="1.500" fill="#2467bd"/><path d="M-7.500 4L0-3 7.500 5v2.500h-15z" fill="#5cc8f2"/><path d="M0-3L-4 2l5 5h6.500V5z" fill="#91e0fb"/><circle cx="3.500" cy="-4.500" r="1.500" fill="#fff"/>`, 20, 24)}</div>`],
      at(1017.5, svg`<circle r="6.800" fill="#f39a27"/><path d="M-6-2A6.500 6.500 0 0 0 4 5Q-3 5-6-2z" fill="#d86f17"/><circle cx="4" cy="-4" r="3.700" fill="#b52027"/><text x="2.800" y="-1.800" font-size="6" fill="#fff">1</text>`, 20),
      [1031, 18, line("79°F", 18, 9.5)], [1055, 25, line("Sunny", 25, 9.5)],
      at(1100.5, svg`<path d="M-4 2L0-2 4 2" fill="none" stroke="#eee" stroke-width="1.200"/>`, 14),
      at(1117, svg`<rect x="-4" y="-3" width="6" height="6" rx="1" fill="none" stroke="#e5e5e5"/><path d="M2-1l2-1v4l-2-1M-3-5h5M-3 5h5" stroke="#e5e5e5" fill="none"/>`, 14),
      at(1133, svg`<path d="M-5.500-1.500h2L-1-4v8l-2.500-2.500h-2z" fill="none" stroke="#eee"/><path d="M1-2q1.500 2 0 4M3-3.500q2.500 3.500 0 7M5-4.500q2 4.500 0 9" stroke="#ddd" fill="none"/>`, 14),
      at(1150, svg`<path d="M-4 4Q-3-3 4-4M-1.500 4Q-1-1 4-1.500M1 4q0-2.500 3-3" stroke="#ccc" fill="none" stroke-width="1.200"/><circle cx="3.500" cy="3.700" r="1" fill="#eee"/>`, 14),
      at(1167.5, svg`<circle cx="-2.500" cy="3" r="2" fill="none" stroke="#e5e5e5" stroke-width="1.200"/><path d="M-1 1.500L4-4.500M0-2.500l4 3.500M2-4l3 2.500" stroke="#e5e5e5" fill="none" stroke-width="1.300"/>`, 14),
      [1182, 15.5, line("ENG", 15.5, 9)],
      [1203, 40, icon(svg`<g fill="#f0f0f0" font-size="8"><text x="-18" y="-3.500" textLength="36" lengthAdjust="spacingAndGlyphs">08:29 ب.ظ</text><text x="-18" y="9" textLength="36" lengthAdjust="spacingAndGlyphs">۱۴۰۳/۰۴/۲۹</text></g>`, 40, 27)],
      at(1259, svg`<path d="M-6-6H4v8.500H-2L-4 5V2.500h-2z" fill="#fff"/><path d="M-4-3.500h6M-4-1h6" stroke="#444"/><circle cx="4" cy="4.500" r="5" fill="#3b372e" stroke="#bbb"/><path d="M2 4q1-3 4-2M4.200 2.500v5" stroke="#ddd" fill="none"/>`),
      [1276, 1, html`<svg width="1" height="27"><rect width="1" height="27" fill="#77736a"/></svg>`],
    ]);
  }

  render() {
    return html`
      <div class="bar">${this.topBar()}</div>
      <div class="bar two">${this.secondBar()}</div>
      <div class="main">
        <div class="browser">
          <div class="head">${strip([at(7, G.triDim, 6, 14), at(17, G.up, 10, 14), at(27, svg`<g opacity=".6">${G.undo}</g>`, 10, 14), [34.5, 27.5, html`<span class="grey">${line("Browser", 27.5, 8.5)}</span>`]])}</div>
          <div class="tabs">${strip([
            [2, 44, html`<div class="all">${line("ALL", 12.5, 8, "bold")}</div>`], [54.5, 31, line("PROJECT", 31, 7.8)], [102, 29, line("PLUGINS", 29, 7.8)],
            [149, 28.5, line("LIBRARY", 28.5, 7.8)], [194.5, 31, line("STARRED", 31, 7.8)], [237, 39, line("!ULTIMATE..", 39, 7.8)],
          ])}</div>
          <div class="listwrap">${rows.map((r) => this.item(r))}</div>
          ${this.preview()}
          <div class="foot">${strip([[17, 14, html`<svg width="14" height="10"><text y="8" font-size="8" fill="#303030">Add</text></svg>`], at(258, svg`<path d="M-4-2.500h7v5h-7" stroke="#444" fill="none"/>`, 12, 18), at(273.5, svg`<circle cx="-.5" cy="-1" r="4" fill="none" stroke="#fff" stroke-width="1.300"/><path d="M2 2l2.500 2.500" stroke="#fff" stroke-width="2"/><path d="M-1-4v3h4" stroke="#ccc" fill="none"/>`, 12, 18)])}</div>
        </div>
        <div class="gap"></div>
        <div class="roll">
          <div class="head">${strip([
            at(296.5, G.tri, 8, 14), at(310, G.wrench, 12, 14), at(324.5, G.magnetB, 12, 14), at(338.5, G.note, 10, 14), at(352.5, G.menuC, 12, 14), at(366.5, G.undo, 10, 14),
            at(389, G.pencil, 12, 14), at(402.5, G.brush, 12, 14), at(416.5, G.brush2, 12, 14), at(430.5, G.no, 12, 14), at(444.5, G.mute, 12, 14), at(458.5, G.slice, 12, 14),
            at(472.5, G.select, 12, 14), at(486.5, G.zoom, 12, 14), at(500.5, G.play, 12, 14), at(522, G.speaker, 12, 14),
            [531, 97, line("Piano roll - MELO 808 2", 97, 9.6, "bold")], at(634, G.triDim, 6, 14),
            at(1246.5, svg`<path d="M-2.500-1h5" stroke="#fff" stroke-width="1.400"/>`, 8, 14), at(1259, G.restore, 8, 14),
            at(1272.5, svg`<rect x="-5.500" y="-5.500" width="11" height="11" rx="2" fill="#2b1a10" stroke="#e08a45" stroke-width="1.300"/><path d="M-3-3l6 6M3-3l-6 6" stroke="#eab080"/><path d="M-1.500 1L7.500 6 5 7.500l2.500 5-2 .8-2.500-5-2 2z" fill="#fff"/>`, 14, 14),
          ], 288)}</div>
          <div class="cols">
            <svg width="48" height="622">
              <defs>
                <linearGradient id="wk"><stop offset="0" stop-color="#c5c7ce"/><stop offset=".6" stop-color="#dfe2ea"/><stop offset="1" stop-color="#eceff8"/></linearGradient>
                <linearGradient id="bk"><stop offset="0" stop-color="#3a3b3f"/><stop offset=".5" stop-color="#47484c"/><stop offset="1" stop-color="#222326"/></linearGradient>
              </defs>
              <path d="M0 27L8 7Q11 1 16 1H47V27z" fill="#a9a9a9"/><path d="M38 12q3 0 3.500-3T45 6" stroke="#ccc" fill="none" stroke-width="1.300"/><path d="M44 16v7h-8z" fill="#ccc"/>
              <svg y="28" width="48" height="492" viewBox="0 0 48 492">${this.keys()}</svg>
              <text x="7.500" y="534.500" font-size="9.500" fill="#eee" font-family="Noto Sans" textLength="30.500" lengthAdjust="spacingAndGlyphs">Control</text><path d="M43 529.500l2.500 2-2.500 2z" fill="#777"/>
            </svg>
            <svg width="930" height="622">
              <defs>
                <linearGradient id="ph"><stop offset="0" stop-color="#888" stop-opacity="0"/><stop offset="1" stop-color="#888"/></linearGradient>
                <linearGradient id="nt" x2="0" y2="1"><stop offset="0" stop-color="#dcdcdc"/><stop offset="1" stop-color="#bdbdbd"/></linearGradient>
              </defs>${this.canvas()}
            </svg>
            <svg width="14" height="622"><rect width="14" height="622" fill="#1a1a1a"/><rect x="0" y="14" width="12" height="13" fill="#252525"/><path d="M4 8l2.500-2.500L9 8" fill="none" stroke="#555"/><rect y="505" width="14" height="13" fill="#2a2a2a"/><path d="M5 511h3" stroke="#555"/><path d="M12.500 0V622" stroke="#101010"/></svg>
          </div>
        </div>
      </div>
      <div class="task">${this.taskbar()}</div>`;
  }
}
